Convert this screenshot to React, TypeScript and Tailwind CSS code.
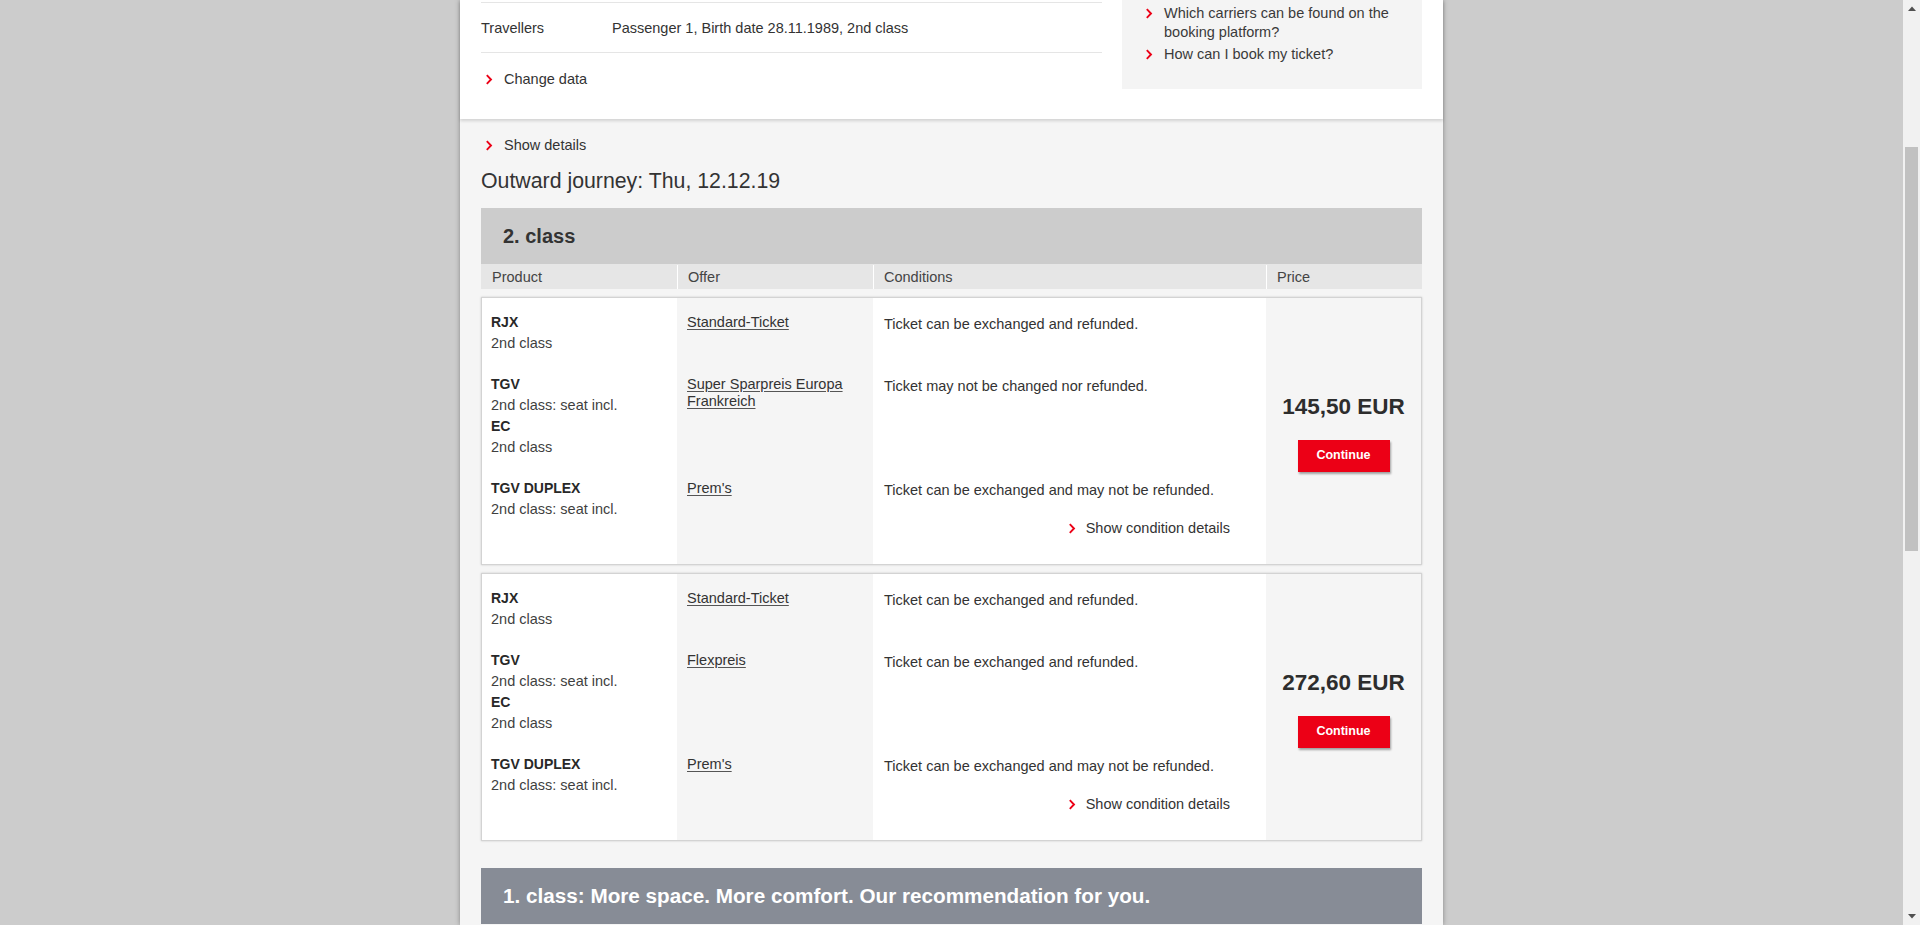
import React from "react";

const Chevron = () => (
  <svg width="8" height="11" viewBox="0 0 8 11" className="shrink-0">
    <path d="M1.8 1.2 L6 5.5 L1.8 9.8" stroke="#ec0016" strokeWidth="1.9" fill="none" />
  </svg>
);

type Prod = { name: string; cls: string };
type Row = { products: Prod[]; offer: string; cond: string; details?: boolean };
type Card = { rows: Row[]; price: string };

const cards: Card[] = [
  {
    price: "145,50 EUR",
    rows: [
      { products: [{ name: "RJX", cls: "2nd class" }], offer: "Standard-Ticket", cond: "Ticket can be exchanged and refunded." },
      {
        products: [
          { name: "TGV", cls: "2nd class: seat incl." },
          { name: "EC", cls: "2nd class" },
        ],
        offer: "Super Sparpreis Europa Frankreich",
        cond: "Ticket may not be changed nor refunded.",
      },
      {
        products: [{ name: "TGV DUPLEX", cls: "2nd class: seat incl." }],
        offer: "Prem's",
        cond: "Ticket can be exchanged and may not be refunded.",
        details: true,
      },
    ],
  },
  {
    price: "272,60 EUR",
    rows: [
      { products: [{ name: "RJX", cls: "2nd class" }], offer: "Standard-Ticket", cond: "Ticket can be exchanged and refunded." },
      {
        products: [
          { name: "TGV", cls: "2nd class: seat incl." },
          { name: "EC", cls: "2nd class" },
        ],
        offer: "Flexpreis",
        cond: "Ticket can be exchanged and refunded.",
      },
      {
        products: [{ name: "TGV DUPLEX", cls: "2nd class: seat incl." }],
        offer: "Prem's",
        cond: "Ticket can be exchanged and may not be refunded.",
        details: true,
      },
    ],
  },
];

function OfferCard({ card }: { card: Card }) {
  return (
    <div className="flex border border-[#d3d3d3] shadow-[0_0_2px_rgba(0,0,0,0.18)] bg-white">
      <div className="w-[784px] flex flex-col">
        {card.rows.map((r, i) => {
          const pad = (i === 0 ? "pt-[14px] " : "") + (i === card.rows.length - 1 ? "pb-[25px]" : "pb-[20px]");
          return (
            <div key={i} className="grid grid-cols-[195px_196px_393px]">
              <div className={"bg-white pl-[9px] " + pad}>
                {r.products.map((p, j) => (
                  <div key={j} className="leading-[21px]">
                    <div className="font-bold text-[14px] text-[#282828]">{p.name}</div>
                    <div className="text-[14.5px] text-[#3f3f3f]">{p.cls}</div>
                  </div>
                ))}
              </div>
              <div className={"bg-[#f5f5f5] pl-[10px] pr-[10px] " + pad}>
                <div className="mt-[2px] leading-[17px] text-[14.5px] text-[#333] underline underline-offset-2 decoration-[#555]">
                  {r.offer}
                </div>
              </div>
              <div className={"bg-white pl-[11px] pr-[36px] " + pad}>
                <div className="mt-[2px] leading-[21px] text-[14.5px] text-[#333]">{r.cond}</div>
                {r.details && (
                  <div className="mt-[17px] flex justify-end items-center gap-[10px] leading-[21px] text-[14.5px] text-[#333]">
                    <Chevron />
                    <span>Show condition details</span>
                  </div>
                )}
              </div>
            </div>
          );
        })}
      </div>
      <div className="flex-1 bg-[#f5f5f5] flex flex-col items-center justify-center pt-[3px]">
        <div className="text-[22.5px] leading-[26px] font-bold text-[#2d2d2d]">{card.price}</div>
        <button className="mt-[20px] w-[92px] h-[32px] bg-[#ec0016] text-white text-[12.5px] font-bold shadow-[1px_2px_2px_rgba(0,0,0,0.35)]">
          Continue
        </button>
      </div>
    </div>
  );
}

function Scrollbar() {
  return (
    <div className="w-[17px] h-full bg-[#f1f1f1] flex flex-col items-center shrink-0">
      <div className="h-[17px] w-full flex items-center justify-center">
        <svg width="8" height="5" viewBox="0 0 8 5">
          <path d="M0 5 L4 0.5 L8 5 Z" fill="#505050" />
        </svg>
      </div>
      <div className="flex-1 w-full flex flex-col items-center">
        <div className="mt-[130px] h-[404px] w-[13px] bg-[#c1c1c1]" />
      </div>
      <div className="h-[17px] w-full flex items-center justify-center">
        <svg width="8" height="5" viewBox="0 0 8 5">
          <path d="M0 0 L4 4.5 L8 0 Z" fill="#505050" />
        </svg>
      </div>
    </div>
  );
}

export default function App() {
  return (
    <div className="flex h-[925px] w-full overflow-hidden bg-[#cccccc] font-['Liberation_Sans',Arial,sans-serif] text-[#333]">
      <div className="flex-1 min-w-0 flex justify-center">
        <div className="w-[983px] flex flex-col shadow-[0_0_5px_rgba(0,0,0,0.35)]">
          {/* top white section */}
          <div className="relative z-10 bg-white h-[119px] shrink-0 shadow-[0_2px_3px_rgba(0,0,0,0.14)] flex px-[21px]">
            <div className="w-[621px] flex flex-col">
              <div className="h-[3px] border-b border-[#e5e5e5]" />
              <div className="h-[50px] pt-[2px] flex items-center border-b border-[#e5e5e5] text-[14.5px]">
                <span className="w-[131px]">Travellers</span>
                <span>Passenger 1, Birth date 28.11.1989, 2nd class</span>
              </div>
              <div className="mt-[16px] flex items-center gap-[11px] pl-[4px] leading-[20px] text-[14.5px]">
                <Chevron />
                <span>Change data</span>
              </div>
            </div>
            <div className="ml-[20px] w-[300px] h-[89px] bg-[#f4f4f4] pl-[23px] pt-[4px] text-[14.5px] leading-[19px] text-[#3a3a3a]">
              <div className="flex gap-[11px] items-start">
                <span className="mt-[4px]"><Chevron /></span>
                <span className="w-[240px]">Which carriers can be found on the booking platform?</span>
              </div>
              <div className="flex gap-[11px] items-start mt-[3px]">
                <span className="mt-[4px]"><Chevron /></span>
                <span>How can I book my ticket?</span>
              </div>
            </div>
          </div>
          {/* lower gray section */}
          <div className="flex-1 bg-[#f5f5f5] px-[21px] flex flex-col">
            <div className="mt-[16px] flex items-center gap-[11px] pl-[4px] leading-[20px] text-[14.5px]">
              <Chevron />
              <span>Show details</span>
            </div>
            <div className="mt-[12px] text-[21.3px] leading-[28px] text-[#333]">Outward journey: Thu, 12.12.19</div>
            <div className="mt-[13px] h-[56px] bg-[#cccccc] pl-[22px] flex items-center text-[20px] font-bold text-[#333]">
              2. class
            </div>
            <div className="grid grid-cols-[196px_196px_393px_156px] h-[24px] text-[14.5px] leading-[24px] pt-[1px] bg-[#e6e6e6] text-[#444]">
              <div className="bg-[#e6e6e6] pl-[11px]">Product</div>
              <div className="bg-[#e6e6e6] pl-[10px] border-l border-white">Offer</div>
              <div className="bg-[#e6e6e6] pl-[10px] border-l border-white">Conditions</div>
              <div className="bg-[#e6e6e6] pl-[10px] border-l border-white">Price</div>
            </div>
            <div className="mt-[9px]">
              <OfferCard card={cards[0]} />
            </div>
            <div className="mt-[8px]">
              <OfferCard card={cards[1]} />
            </div>
            <div className="mt-[27px] h-[56px] shrink-0 bg-[#878c96] pl-[22px] flex items-center text-[20.7px] font-bold text-white">
              1. class: More space. More comfort. Our recommendation for you.
            </div>
          </div>
        </div>
      </div>
      <Scrollbar />
    </div>
  );
}
